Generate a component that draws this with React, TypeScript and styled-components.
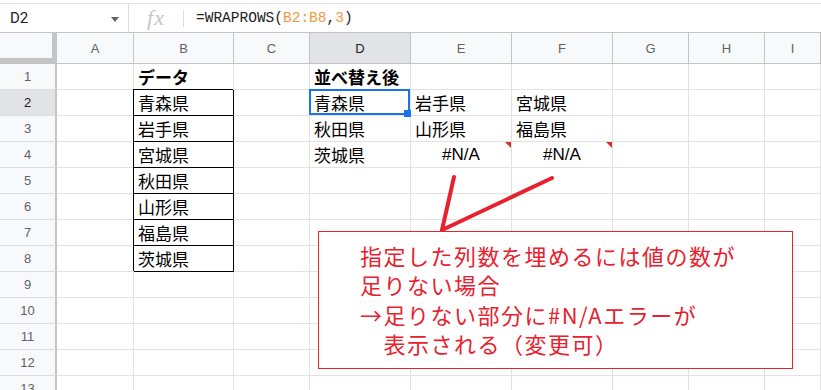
import React from "react"
import styled, { createGlobalStyle, css } from "styled-components"

const GlobalStyle = createGlobalStyle`
  body {
    margin: 0;
    background: #fff;
    font-family: "Liberation Sans", "Noto Sans CJK JP", sans-serif;
  }
`

const COLUMNS = ["A", "B", "C", "D", "E", "F", "G", "H", "I"]
const ROWS = 13

interface ICell {
  text?: string
  bold?: boolean
  boxed?: boolean
  selected?: boolean
  error?: boolean
}

// 表の中身（行番号 -> 列 -> セル）
const DATA: Record<number, Record<string, ICell>> = {
  1: { B: { text: "データ", bold: true }, D: { text: "並べ替え後", bold: true } },
  2: {
    B: { text: "青森県", boxed: true },
    D: { text: "青森県", selected: true },
    E: { text: "岩手県" },
    F: { text: "宮城県" },
  },
  3: { B: { text: "岩手県", boxed: true }, D: { text: "秋田県" }, E: { text: "山形県" }, F: { text: "福島県" } },
  4: {
    B: { text: "宮城県", boxed: true },
    D: { text: "茨城県" },
    E: { text: "#N/A", error: true },
    F: { text: "#N/A", error: true },
  },
  5: { B: { text: "秋田県", boxed: true } },
  6: { B: { text: "山形県", boxed: true } },
  7: { B: { text: "福島県", boxed: true } },
  8: { B: { text: "茨城県", boxed: true } },
}

const Page = styled.div`
  position: relative;
  width: 821px;
  height: 390px;
  overflow: hidden;
  padding-top: 3px;
  box-sizing: border-box;
  background: #fff;
`

const FormulaBar = styled.div`
  display: flex;
  align-items: center;
  height: 30px;
  box-sizing: border-box;
  border-top: 1px solid #e3e3e3;
  border-bottom: 1px solid #c4c4c4;
`

const NameBox = styled.div`
  display: flex;
  align-items: center;
  justify-content: space-between;
  width: 129px;
  height: 100%;
  box-sizing: border-box;
  padding: 0 9px 0 10px;
  border-right: 1px solid #dadce0;
  font-family: Roboto, "Liberation Sans", sans-serif;
  font-size: 15px;
  color: #202124;
`

const Caret = styled.span`
  width: 0;
  height: 0;
  margin-top: 2px;
  border-left: 4.5px solid transparent;
  border-right: 4.5px solid transparent;
  border-top: 5px solid #5f6368;
`

const FxLabel = styled.div`
  width: 54px;
  text-align: center;
  font-family: "Liberation Serif", "DejaVu Serif", serif;
  font-style: italic;
  font-size: 22px;
  color: #c4c7c5;
  letter-spacing: 1px;
`

const Divider = styled.div`
  width: 1px;
  height: 17px;
  background: #dadce0;
`

const Formula = styled.div`
  padding-left: 12px;
  font-family: "Liberation Mono", "DejaVu Sans Mono", monospace;
  font-size: 14.5px;
  color: #202124;
`

const Ref = styled.span`
  color: #f09a3e;
`

const Sheet = styled.div`
  display: grid;
  grid-template-columns: 57px 77px 100px 76px 101px 101px 101px 76px 76px 1fr;
  grid-template-rows: 31px repeat(${ROWS}, 26px);
`

const Corner = styled.div`
  background: #f8f9fa;
  border-right: 5px solid #c4c4c4;
  border-bottom: 6px solid #c4c4c4;
`

const ColHeader = styled.div<{ $active?: boolean }>`
  display: flex;
  align-items: center;
  justify-content: center;
  background: ${(p) => (p.$active ? "#e1e3e6" : "#f8f9fa")};
  border-right: 1px solid #c4c4c4;
  border-bottom: 1px solid #c4c4c4;
  font-size: 13px;
  color: ${(p) => (p.$active ? "#202124" : "#5f6368")};
`

const RowHeader = styled.div<{ $active?: boolean }>`
  display: flex;
  align-items: center;
  justify-content: center;
  background: ${(p) => (p.$active ? "#e1e3e6" : "#f8f9fa")};
  border-right: 2px solid #c4c4c4;
  border-bottom: 1px solid #dcdcdc;
  font-size: 13px;
  color: ${(p) => (p.$active ? "#202124" : "#5f6368")};
`

const Cell = styled.div<{ $bold?: boolean; $boxed?: boolean; $selected?: boolean; $error?: boolean }>`
  position: relative;
  display: flex;
  align-items: center;
  justify-content: ${(p) => (p.$error ? "center" : "flex-start")};
  padding: 0 4px;
  border-right: 1px solid #e2e2e2;
  border-bottom: 1px solid #e2e2e2;
  font-family: "Liberation Sans", "Noto Sans CJK JP", sans-serif;
  font-size: 17px;
  font-weight: ${(p) => (p.$bold ? 700 : 400)};
  color: #000;
  white-space: nowrap;

  ${(p) =>
    p.$boxed &&
    css`
      border-color: #000;
      box-shadow: -1px -1px 0 #000;
    `}

  ${(p) =>
    p.$selected &&
    css`
      &::before {
        content: "";
        position: absolute;
        top: -1px;
        left: -1px;
        right: 0;
        bottom: 0;
        border: 2px solid #1a73e8;
        z-index: 2;
      }
      &::after {
        content: "";
        position: absolute;
        right: -1px;
        bottom: -2px;
        width: 7px;
        height: 7px;
        background: #1a73e8;
        z-index: 3;
      }
    `}

  ${(p) =>
    p.$error &&
    css`
      &::after {
        content: "";
        position: absolute;
        top: 0;
        right: 0;
        border-top: 6px solid #d93025;
        border-left: 6px solid transparent;
      }
    `}
`

const Arrow = styled.svg`
  position: absolute;
  left: 0;
  top: 0;
  pointer-events: none;
`

const Callout = styled.div`
  position: absolute;
  left: 318px;
  top: 231px;
  width: 475px;
  height: 138px;
  box-sizing: border-box;
  padding: 9px 0 0 41px;
  background: #fff;
  border: 1px solid #e8212e;
  font-family: "Noto Sans CJK JP", sans-serif;
  font-size: 22px;
  line-height: 29.3px;
  letter-spacing: 1.5px;
  color: #e8212e;
  white-space: pre;
`

const App = () => {
  return (
    <Page>
      <GlobalStyle />
      <FormulaBar>
        <NameBox>
          D2
          <Caret />
        </NameBox>
        <FxLabel>fx</FxLabel>
        <Divider />
        <Formula>
          =WRAPROWS(<Ref>B2:B8</Ref>,<Ref>3</Ref>)
        </Formula>
      </FormulaBar>
      <Sheet>
        <Corner />
        {COLUMNS.map((c) => (
          <ColHeader key={c} $active={c === "D"}>
            {c}
          </ColHeader>
        ))}
        {Array.from({ length: ROWS }, (_, i) => i + 1).map((r) => (
          <React.Fragment key={r}>
            <RowHeader $active={r === 2}>{r}</RowHeader>
            {COLUMNS.map((c) => {
              const cell = DATA[r]?.[c] ?? {}
              return (
                <Cell
                  key={c}
                  $bold={cell.bold}
                  $boxed={cell.boxed}
                  $selected={cell.selected}
                  $error={cell.error}
                >
                  {cell.text}
                </Cell>
              )
            })}
          </React.Fragment>
        ))}
      </Sheet>
      <Arrow width="821" height="390" viewBox="0 0 821 390">
        <line x1="454" y1="177" x2="442" y2="230" stroke="#e8212e" strokeWidth="4" strokeLinecap="round" />
        <line x1="552" y1="178" x2="442" y2="230" stroke="#e8212e" strokeWidth="4" strokeLinecap="round" />
      </Arrow>
      <Callout>
        {"指定した列数を埋めるには値の数が\n足りない場合\n→足りない部分に#N/Aエラーが\n　表示される（変更可）"}
      </Callout>
    </Page>
  )
}

export default App
